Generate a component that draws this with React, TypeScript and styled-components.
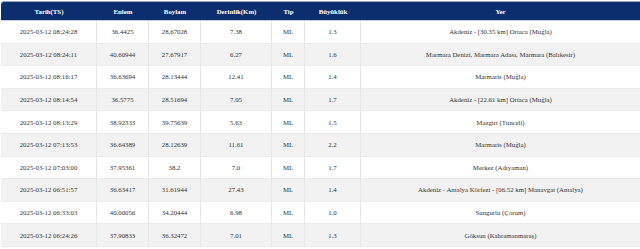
import styled, { createGlobalStyle } from "styled-components";

const GlobalStyle = createGlobalStyle`
  html, body {
    margin: 0;
    padding: 0;
    background: #fff;
  }
  body {
    font-family: "Liberation Serif", "Times New Roman", serif;
    overflow: hidden;
  }
`;

const Wrapper = styled.div`
  width: 640px;
  height: 249px;
  padding: 1px 0 0 1px;
  box-sizing: border-box;
  overflow: hidden;
`;

const Table = styled.table`
  width: 639px;
  border-collapse: separate;
  border-spacing: 0;
  table-layout: fixed;
  font-size: 6.8px;
  color: #333;
`;

const HeadRow = styled.tr`
  background-color: #0c2e6e;
`;

const HeadCell = styled.th`
  height: 18px;
  padding: 0;
  color: #fff;
  font-weight: bold;
  text-align: center;
  border-top: 1px solid #9aa6bf;
  border-bottom: 1px solid #c9cfdc;

  &:first-child {
    border-top-left-radius: 4px;
  }
`;

const Row = styled.tr<{ $striped: boolean }>`
  background-color: ${(p) => (p.$striped ? "#f2f2f2" : "#fff")};
`;

const Cell = styled.td`
  height: 21.6px;
  padding: 0;
  text-align: center;
  vertical-align: middle;
  white-space: nowrap;
  border-bottom: 1px solid #ececec;
  border-right: 1px solid #e6e6e6;

  &:last-child {
    border-right: none;
  }
`;

const widths = [96, 52, 52, 71, 33, 56, 279];
const headers = ["Tarih(TS)", "Enlem", "Boylam", "Derinlik(Km)", "Tip", "Büyüklük", "Yer"];

const quakes = [
  ["2025-03-12 08:24:28", "36.4425", "28.67028", "7.38", "ML", "1.3", "Akdeniz - [30.35 km] Ortaca (Muğla)"],
  ["2025-03-12 08:24:11", "40.60944", "27.67917", "6.27", "ML", "1.6", "Marmara Denizi, Marmara Adası, Marmara (Balıkesir)"],
  ["2025-03-12 08:16:17", "36.63694", "28.13444", "12.41", "ML", "1.4", "Marmaris (Muğla)"],
  ["2025-03-12 08:14:54", "36.5775", "28.51694", "7.05", "ML", "1.7", "Akdeniz - [22.61 km] Ortaca (Muğla)"],
  ["2025-03-12 08:13:29", "38.92333", "39.75639", "5.63", "ML", "1.5", "Mazgirt (Tunceli)"],
  ["2025-03-12 07:13:53", "36.64389", "28.12639", "11.61", "ML", "2.2", "Marmaris (Muğla)"],
  ["2025-03-12 07:03:00", "37.95361", "38.2", "7.0", "ML", "1.7", "Merkez (Adıyaman)"],
  ["2025-03-12 06:51:57", "36.63417", "31.61944", "27.43", "ML", "1.4", "Akdeniz - Antalya Körfezi - [06.52 km] Manavgat (Antalya)"],
  ["2025-03-12 06:33:03", "40.00056", "34.20444", "6.98", "ML", "1.0", "Sungurlu (Çorum)"],
  ["2025-03-12 06:24:26", "37.90833", "36.32472", "7.01", "ML", "1.3", "Göksun (Kahramanmaraş)"],
];

export default function App() {
  return (
    <Wrapper>
      <GlobalStyle />
      <Table>
        <colgroup>
          {widths.map((w, i) => (
            <col key={i} style={{ width: w }} />
          ))}
        </colgroup>
        <thead>
          <HeadRow>
            {headers.map((h) => (
              <HeadCell key={h}>{h}</HeadCell>
            ))}
          </HeadRow>
        </thead>
        <tbody>
          {quakes.map((q, i) => (
            <Row key={i} $striped={i % 2 === 1}>
              {q.map((v, j) => (
                <Cell key={j}>{v}</Cell>
              ))}
            </Row>
          ))}
        </tbody>
      </Table>
    </Wrapper>
  );
}
